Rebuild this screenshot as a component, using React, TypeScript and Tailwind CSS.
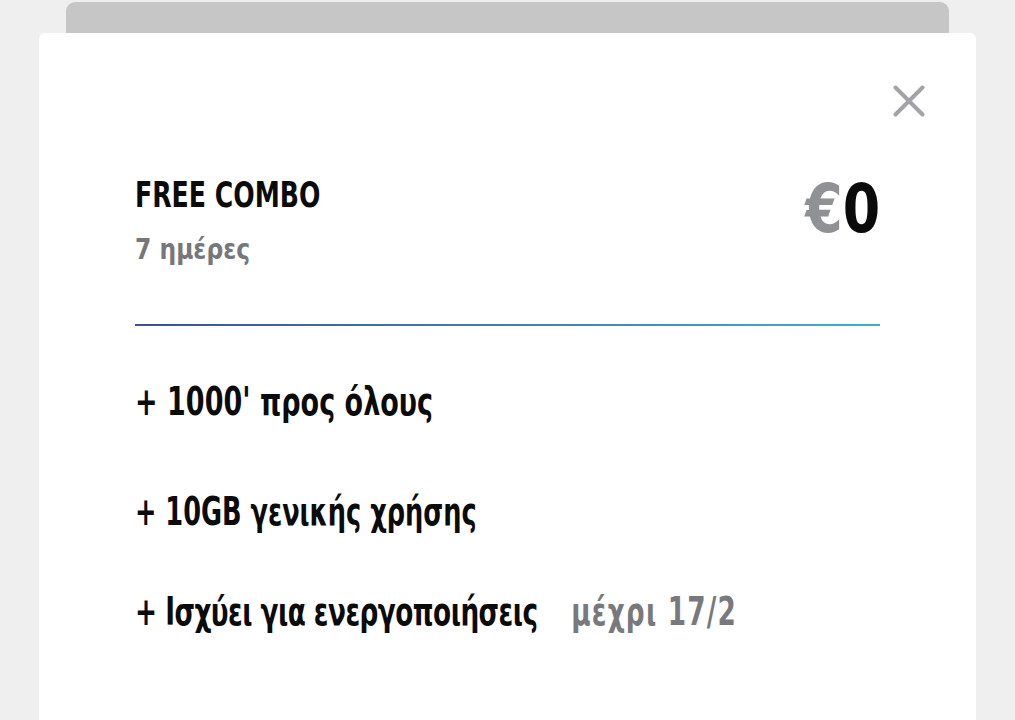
const font = {
  fontFamily:
    '"Liberation Sans Narrow", "DejaVu Sans Condensed", "Roboto Condensed", "Liberation Sans", sans-serif',
};

function CloseIcon() {
  return (
    <svg width="32" height="32" viewBox="0 0 32 32" fill="none" className="text-[#a3a3a7]">
      <path d="M2.5 2.5L29.5 29.5M29.5 2.5L2.5 29.5" stroke="currentColor" strokeWidth="4" strokeLinecap="round" />
    </svg>
  );
}

export default function App() {
  return (
    <div className="w-[1015px] h-[720px] overflow-hidden bg-[#efefef] pt-[2px]" style={font}>
      <div className="mx-[66px] h-[31px] rounded-t-[9px] bg-[#c6c6c6]" />
      <div className="mx-[39px] h-[700px] rounded-t-[6px] bg-white">
        <div className="flex justify-end pt-[52px] pr-[51px]">
          <CloseIcon />
        </div>
        <div className="px-[96px]">
          <div className="mt-[61px] flex items-start justify-between">
            <div className="flex flex-col items-start">
              <div className="origin-left scale-x-[0.80] whitespace-nowrap text-[35px] leading-none font-bold text-[#0b0b0b]">
                FREE COMBO
              </div>
              <div className="mt-[23px] origin-left scale-x-[0.93] whitespace-nowrap text-[28px] leading-none font-bold text-[#77777b]">
                7 ημέρες
              </div>
            </div>
            <div className="-mt-[3px] origin-right scale-x-[0.88] whitespace-nowrap text-[68px] leading-none font-bold">
              <span className="text-[#8f9195]">€</span>
              <span className="text-[#0b0b0b]">0</span>
            </div>
          </div>
          <div className="mt-[60px] h-[2px] bg-gradient-to-r from-[#3e4f95] to-[#3cb2c1]" />
          <div className="flex flex-col items-start text-[39px] leading-none font-bold text-[#0b0b0b]">
            <div className="mt-[56px] origin-left scale-x-[0.77] whitespace-nowrap">+ 1000' προς όλους</div>
            <div className="mt-[71px] origin-left scale-x-[0.73] whitespace-nowrap">+ 10GB γενικής χρήσης</div>
            <div className="mt-[61px] flex origin-left scale-x-[0.75] items-baseline whitespace-nowrap">
              <span className="tracking-[-0.7px]">+ Ισχύει για ενεργοποιήσεις</span>
              <span className="ml-[45px] tracking-[1.6px] text-[#78797d]">μέχρι 17/2</span>
            </div>
          </div>
        </div>
      </div>
    </div>
  );
}
